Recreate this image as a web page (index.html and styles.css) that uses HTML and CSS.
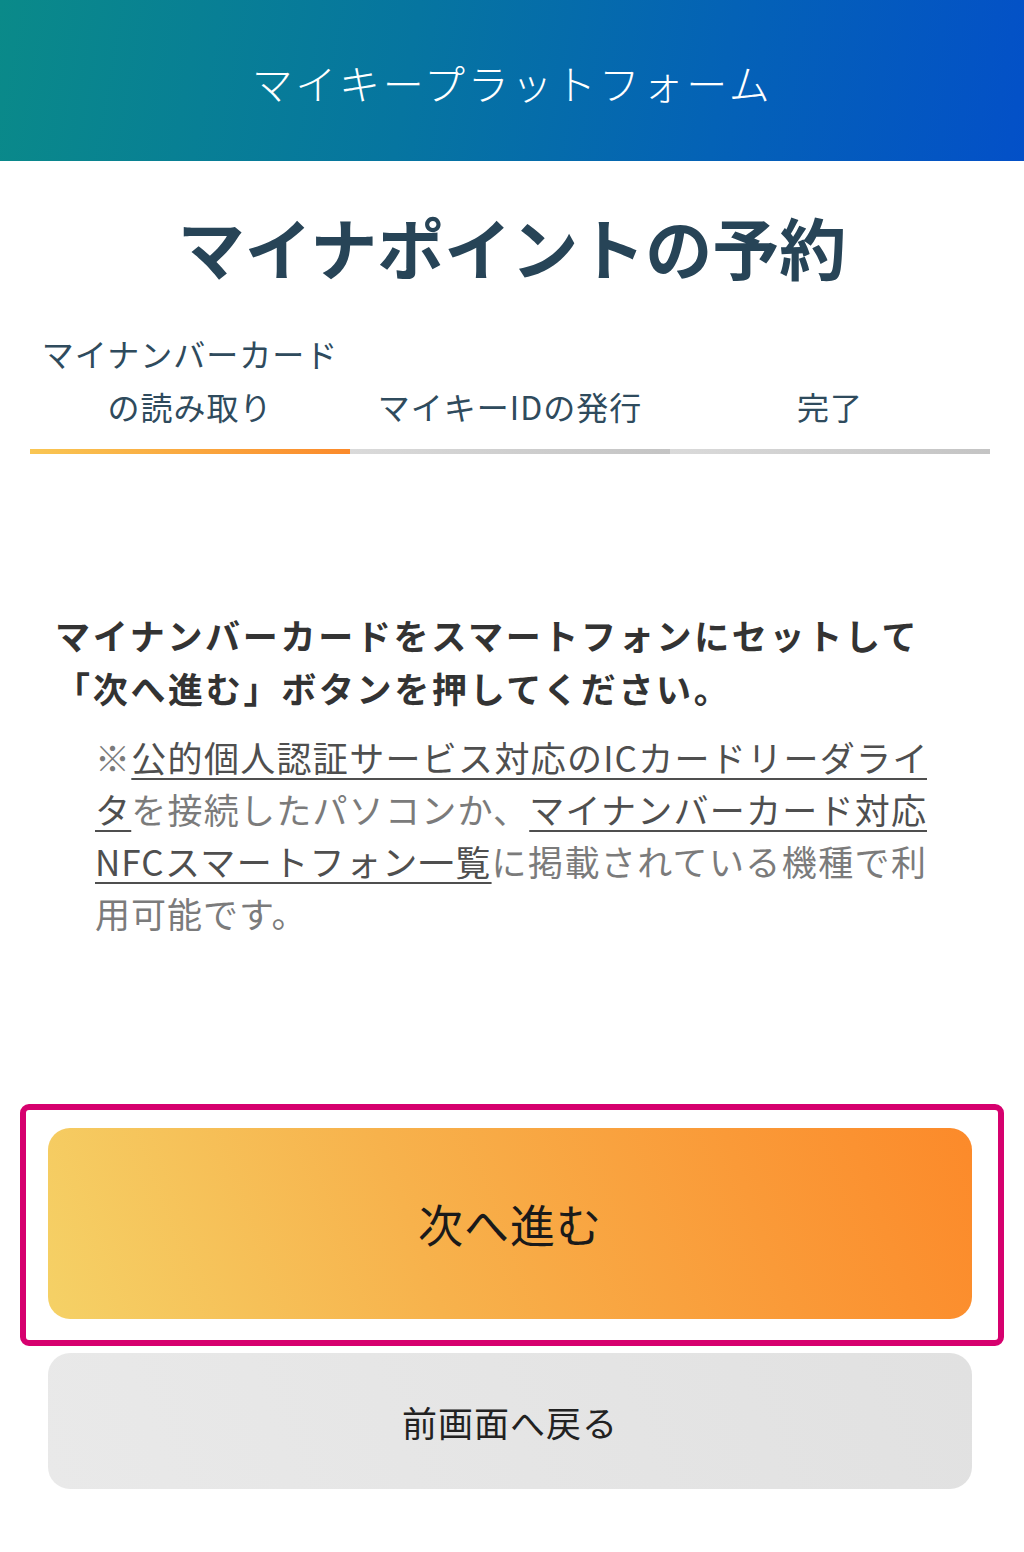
FILE: index.html
```html
<!DOCTYPE html>
<html lang="ja">
<head>
<meta charset="utf-8">
<title>マイナポイントの予約</title>
<link rel="stylesheet" href="styles.css">
</head>
<body>
<header class="topbar">
  <div class="brand">マイキープラットフォーム</div>
</header>
<main class="page">
  <h1 class="title">マイナポイントの予約</h1>
  <ol class="steps">
    <li class="step active"><span class="step-label">マイナンバーカードの読み取り</span><span class="step-bar"></span></li>
    <li class="step"><span class="step-label">マイキーIDの発行</span><span class="step-bar"></span></li>
    <li class="step"><span class="step-label">完了</span><span class="step-bar"></span></li>
  </ol>
  <p class="lead">マイナンバーカードをスマートフォンにセットして<br>「次へ進む」ボタンを押してください。</p>
  <p class="note">※<a class="link" href="#">公的個人認証サービス対応のICカードリーダライ</a><a class="link" href="#">タ</a>を接続したパソコンか、<a class="link" href="#">マイナンバーカード対応</a><a class="link" href="#">NFCスマートフォン一覧</a>に掲載されている機種で利用可能です。</p>
  <div class="actions">
    <div class="primary-wrap">
      <button class="btn btn-primary" type="button">次へ進む</button>
      <span class="highlight"></span>
    </div>
    <button class="btn btn-secondary" type="button">前画面へ戻る</button>
  </div>
</main>
</body>
</html>
```
FILE: styles.css
```css
* { box-sizing: border-box; }
html, body { margin: 0; padding: 0; background: #ffffff; }
body {
  font-family: "Noto Sans CJK JP", "Noto Sans", sans-serif;
  width: 1024px;
  min-height: 1552px;
}
.topbar {
  height: 161px;
  display: flex;
  align-items: center;
  justify-content: center;
  background: linear-gradient(100deg, #0a8a89 0%, #0675a0 40%, #0462b6 70%, #0350c8 100%);
}
.brand {
  color: #ffffff;
  font-size: 41px;
  font-weight: 300;
  letter-spacing: 2.7px;
  line-height: 1;
  padding-top: 4px;
}
.page { display: flex; flex-direction: column; }
.title {
  margin: 40px 0 0;
  text-align: center;
  font-size: 67px;
  line-height: 90px;
  font-weight: 700;
  color: #274457;
  letter-spacing: 0;
}
.steps {
  list-style: none;
  margin: 36px 34px 0 30px;
  padding: 0;
  display: flex;
  align-items: flex-end;
}
.step {
  flex: 1 1 0;
  display: flex;
  flex-direction: column;
  align-items: stretch;
}
.step-label {
  display: block;
  text-align: center;
  font-size: 32px;
  line-height: 53px;
  letter-spacing: 1px;
  color: #2f4b5d;
  padding: 0 6px 16px;
}
.step-bar {
  display: block;
  height: 5px;
  background: linear-gradient(90deg, #dadada, #c4c4c4);
}
.step.active .step-bar {
  background: linear-gradient(90deg, #f9c653, #fb8a2b);
}
.lead {
  margin: 154px 0 0 55px;
  font-size: 35px;
  line-height: 53px;
  font-weight: 700;
  letter-spacing: 2.7px;
  color: #333333;
}
.note {
  margin: 17px 0 0 95px;
  width: 832px;
  font-size: 35px;
  line-height: 52px;
  letter-spacing: 1px;
  color: #7b7b7b;
  text-align: justify;
}
.link {
  color: #4f4f4f;
  text-decoration: underline;
  text-decoration-thickness: 2px;
  text-underline-offset: 6px;
}
.actions {
  margin: 189px 52px 0 48px;
  display: flex;
  flex-direction: column;
  gap: 34px;
}
.primary-wrap { position: relative; }
.btn {
  display: flex;
  align-items: center;
  justify-content: center;
  width: 100%;
  border: none;
  border-radius: 22px;
  font-family: "Noto Sans CJK JP", "Noto Sans", sans-serif;
  color: #1a1a1a;
  cursor: pointer;
}
.btn-primary {
  height: 191px;
  font-size: 45px;
  letter-spacing: 1px;
  background: linear-gradient(70deg, #f5d166 0%, #f7b24c 40%, #fa9a38 75%, #fc8a2a 100%);
}
.btn-secondary {
  height: 136px;
  font-size: 35px;
  letter-spacing: 1px;
  background: linear-gradient(70deg, #e9e9e9, #e1e1e1);
  color: #222222;
}
.highlight {
  position: absolute;
  top: -24px;
  left: -28px;
  right: -32px;
  bottom: -27px;
  border: 6px solid #d6006e;
  border-radius: 9px;
  pointer-events: none;
}
```
